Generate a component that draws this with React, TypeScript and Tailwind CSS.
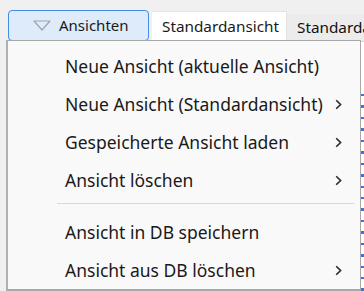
const font = { fontFamily: '"Noto Sans", "Open Sans", sans-serif' };

const items: { label: string; sub?: boolean; sepBefore?: boolean }[] = [
  { label: 'Neue Ansicht (aktuelle Ansicht)' },
  { label: 'Neue Ansicht (Standardansicht)', sub: true },
  { label: 'Gespeicherte Ansicht laden', sub: true },
  { label: 'Ansicht löschen', sub: true },
  { label: 'Ansicht in DB speichern', sepBefore: true },
  { label: 'Ansicht aus DB löschen', sub: true },
];

function Chevron() {
  return (
    <svg width="7" height="11" viewBox="0 0 7 11" className="shrink-0">
      <path d="M1.2 1.2 L5.6 5.5 L1.2 9.8" fill="none" stroke="#2b2b2b" strokeWidth="1.6" />
    </svg>
  );
}

export default function App() {
  return (
    <div
      className="relative w-[364px] h-[291px] overflow-hidden bg-[#f0f0f0] text-[#1a1a1a]"
      style={font}
    >
      {/* Leiste mit Button und Tabs */}
      <div className="flex items-end pt-[10px] pl-[8px] h-[41px]">
        <button className="flex items-center h-[31px] w-[141px] rounded-[4px] border border-[#3e8de6] bg-[#ddebfb] pl-[24px] gap-[8px] text-[15px]">
          <svg width="18" height="11" viewBox="0 0 18 11" className="shrink-0">
            <path d="M1 1 L17 1 L9 10 Z" fill="none" stroke="#a3a3a3" strokeWidth="1.2" strokeLinejoin="round" />
          </svg>
          <span>Ansichten</span>
        </button>
        <div className="ml-[3px] h-[30px] w-[135px] bg-white border-t border-r border-[#e3e3e3] flex items-center pl-[10px] text-[15.3px]">
          Standardansicht
        </div>
        <div className="h-[27px] flex-1 bg-[#ececec] flex items-center pl-[10px] text-[15.3px] whitespace-nowrap overflow-hidden text-[#111]">
          Standardansicht
        </div>
      </div>

      {/* Inhaltsbereich */}
      <div className="h-[250px] bg-white border-t border-[#d8d8d8] ml-[7px] flex justify-end">
        <div className="w-[3px] flex flex-col gap-[9px] pt-[52px]">
          <div className="h-[3px] bg-[#4a6fc9]" />
          <div className="h-[3px] bg-[#4a6fc9]" />
          <div className="h-[3px] bg-[#4a6fc9]" />
          <div className="h-[3px] bg-[#4a6fc9]" />
          <div className="h-[3px] bg-[#4a6fc9]" />
          <div className="h-[3px] bg-[#4a6fc9]" />
          <div className="h-[3px] bg-[#4a6fc9]" />
          <div className="h-[3px] bg-[#4a6fc9]" />
          <div className="h-[3px] bg-[#4a6fc9]" />
          <div className="h-[3px] bg-[#4a6fc9]" />
          <div className="h-[3px] bg-[#4a6fc9]" />
          <div className="h-[3px] bg-[#4a6fc9]" />
          <div className="h-[3px] bg-[#4a6fc9]" />
          <div className="h-[3px] bg-[#4a6fc9]" />
          <div className="h-[3px] bg-[#4a6fc9]" />
          <div className="h-[3px] bg-[#4a6fc9]" />
          <div className="h-[3px] bg-[#4a6fc9]" />
          <div className="h-[3px] bg-[#4a6fc9]" />
        </div>
      </div>

      {/* Dropdown-Menü */}
      <div className="absolute left-[6px] top-[40px] w-[355px] h-[251px] bg-[#f9f9f9] border border-[#a8a8a8] border-l-2 border-b-2 border-l-[#b0b0b0] pt-[6px]">
        {items.map((it) => (
          <div key={it.label}>
            {it.sepBefore && <div className="ml-[49px] mr-[6px] mt-[4px] mb-[9px] h-px bg-[#d9d9d9]" />}
            <div className="h-[38px] flex items-center pl-[57px] pr-[18px] text-[17.5px] text-[#1a1a1a]">
              <span className="flex-1 whitespace-nowrap">{it.label}</span>
              {it.sub && <Chevron />}
            </div>
          </div>
        ))}
      </div>
    </div>
  );
}
